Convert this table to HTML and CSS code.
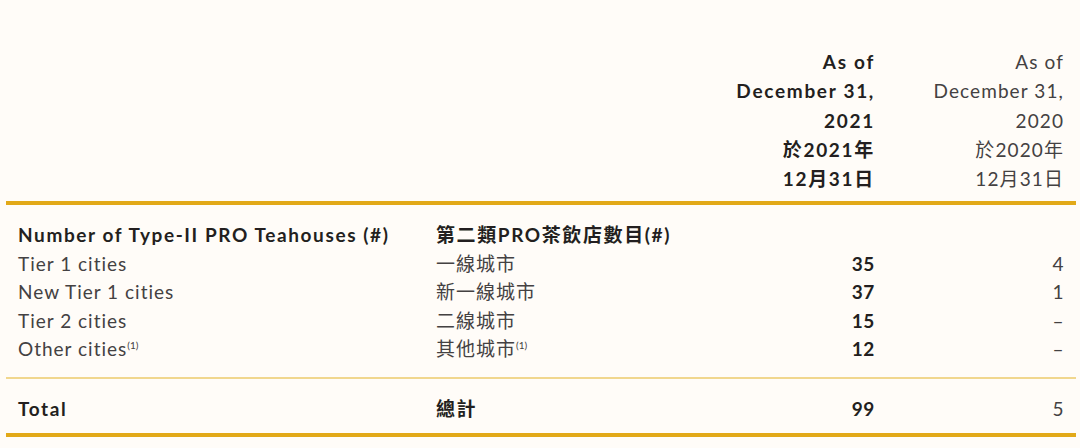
FILE: index.html
```html
<!DOCTYPE html>
<html lang="zh-Hant">
<head>
<meta charset="utf-8">
<link rel="stylesheet" href="styles.css">
</head>
<body>
<div class="page">
  <table class="stats">
    <colgroup>
      <col class="c-label">
      <col class="c-zh">
      <col class="c-y1">
      <col class="c-y2">
    </colgroup>
    <thead>
      <tr>
        <th></th>
        <th></th>
        <th class="num bold">As of<br>December 31,<br>2021<br>於2021年<br>12月31日</th>
        <th class="num">As of<br>December 31,<br>2020<br>於2020年<br>12月31日</th>
      </tr>
    </thead>
    <tbody class="body">
      <tr class="first">
        <td class="bold">Number of Type-II PRO Teahouses (#)</td>
        <td class="bold">第二類PRO茶飲店數目(#)</td>
        <td></td>
        <td></td>
      </tr>
      <tr>
        <td>Tier 1 cities</td>
        <td>一線城市</td>
        <td class="num bold">35</td>
        <td class="num">4</td>
      </tr>
      <tr>
        <td>New Tier 1 cities</td>
        <td>新一線城市</td>
        <td class="num bold">37</td>
        <td class="num">1</td>
      </tr>
      <tr>
        <td>Tier 2 cities</td>
        <td>二線城市</td>
        <td class="num bold">15</td>
        <td class="num">–</td>
      </tr>
      <tr class="last">
        <td>Other cities<sup>(1)</sup></td>
        <td>其他城市<sup>(1)</sup></td>
        <td class="num bold">12</td>
        <td class="num">–</td>
      </tr>
    </tbody>
    <tfoot>
      <tr>
        <td class="bold">Total</td>
        <td class="bold">總計</td>
        <td class="num bold">99</td>
        <td class="num">5</td>
      </tr>
    </tfoot>
  </table>
</div>
</body>
</html>
```
FILE: styles.css
```css
html, body {
  margin: 0;
  padding: 0;
}
body {
  background: #fffcf8;
  font-family: Lato, "Noto Sans CJK TC", sans-serif;
  color: #444142;
  width: 1080px;
  height: 448px;
  overflow: hidden;
}
.page {
  padding: 47px 4px 0 6px;
}
.stats {
  width: 1070px;
  border-collapse: collapse;
  table-layout: fixed;
  font-size: 19px;
}
.c-label { width: 430px; }
.c-zh { width: 270px; }
.c-y1 { width: 181px; }
.c-y2 { width: 189px; }
.stats th, .stats td {
  padding: 0 12px;
  text-align: left;
  font-weight: 400;
  line-height: 28.5px;
  white-space: nowrap;
  letter-spacing: 1px;
}
.stats tr > :nth-child(2) {
  padding-left: 0;
}
.stats th {
  line-height: 29.3px;
  vertical-align: bottom;
  padding-bottom: 8px;
}
.stats thead tr {
  border-bottom: 4px solid #e2a918;
}
.stats .num {
  text-align: right;
  padding-right: 12px;
  letter-spacing: 0.6px;
}
.stats .bold {
  font-weight: 700;
  color: #231f20;
  letter-spacing: 1.6px;
}
.stats td.num.bold {
  letter-spacing: 0.6px;
}
.stats th.num { letter-spacing: 1.1px; }
.stats th.num.bold { letter-spacing: 1.7px; }
.body tr.first td {
  padding-top: 16px;
}
.body tr.last td {
  padding-bottom: 13px;
}
.body tr.last {
  border-bottom: 2px solid #f1d78e;
}
tfoot td {
  padding-top: 16px !important;
  padding-bottom: 10px !important;
}
tfoot tr {
  border-bottom: 4px solid #e2a918;
}
sup {
  font-size: 10px;
  line-height: 0;
  vertical-align: 7px;
  letter-spacing: 0;
}
```
